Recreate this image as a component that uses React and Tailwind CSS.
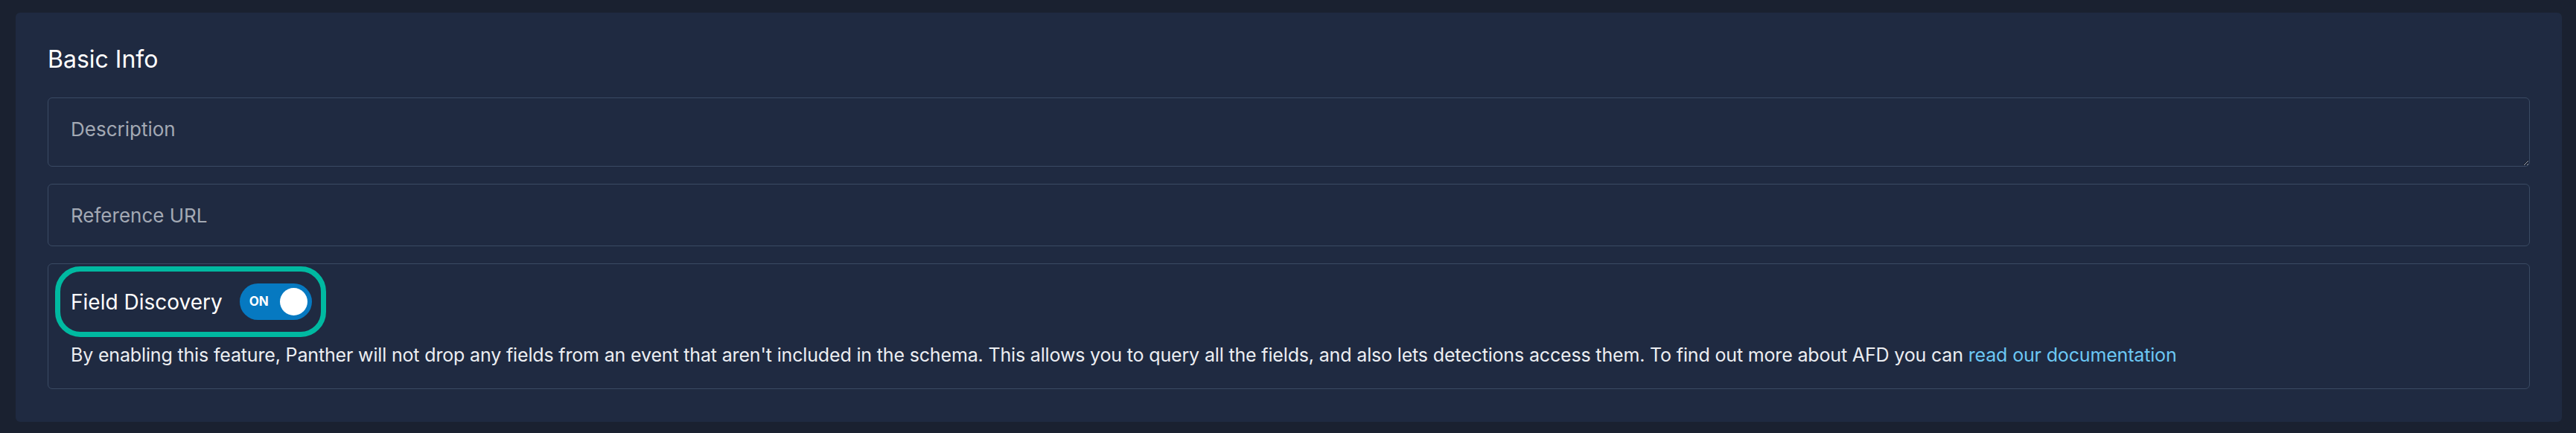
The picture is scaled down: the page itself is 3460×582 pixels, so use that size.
import { useState } from "react";

export default function App() {
  const [enabled, setEnabled] = useState(true);

  return (
    <div
      className="min-h-[582px] bg-[#1a2130] pl-[21px] pr-[19px] pt-[17px] pb-[15px]"
      style={{ fontFamily: "Inter, 'Noto Sans', sans-serif" }}
    >
      <div className="h-[550px] rounded-md bg-[#1f2a41] px-[43px] pt-[43px]">
        <h2 className="text-[32px] leading-[40px] font-normal text-white">Basic Info</h2>

        <div className="mt-[31px] flex flex-col gap-[23px]">
          {/* Description */}
          <textarea
            placeholder="Description"
            className="block h-[93px] w-full rounded-md border border-[#3a4a63] bg-transparent px-[30px] pt-[22px] text-[26px] leading-[39px] text-white outline-none placeholder:text-[#a3a9b4]"
          />

          {/* Reference URL */}
          <input
            type="text"
            placeholder="Reference URL"
            className="block h-[84px] w-full rounded-md border border-[#3a4a63] bg-transparent px-[30px] text-[26px] text-white outline-none placeholder:text-[#a3a9b4]"
          />

          {/* Field Discovery */}
          <div className="h-[169px] rounded-md border border-[#3a4a63] pl-[9px] pt-[3px]">
            <div className="inline-flex h-[95px] items-center gap-[23px] rounded-[34px] border-[7px] border-[#00b9a1] pl-[14px] pr-[12px]">
              <span className="text-[28px] text-white">Field Discovery</span>
              <button
                onClick={() => setEnabled(v => !v)}
                className="flex h-[49px] w-[97px] items-center justify-between rounded-full bg-[#0679c1] pl-[13px] pr-[6px]"
              >
                <span className="text-[17px] font-bold text-white">{enabled ? "ON" : "OFF"}</span>
                <span className="h-[37px] w-[37px] rounded-full bg-white" />
              </button>
            </div>
            <p className="mt-[5px] pl-[21px] text-[25px] leading-[39px] tracking-[-0.16px] text-[#eceef2]">
              By enabling this feature, Panther will not drop any fields from an event that aren't included in the
              schema. This allows you to query all the fields, and also lets detections access them. To find out more
              about AFD you can <a className="text-[#6cc8f4]">read our documentation</a>
            </p>
          </div>
        </div>
      </div>
    </div>
  );
}
